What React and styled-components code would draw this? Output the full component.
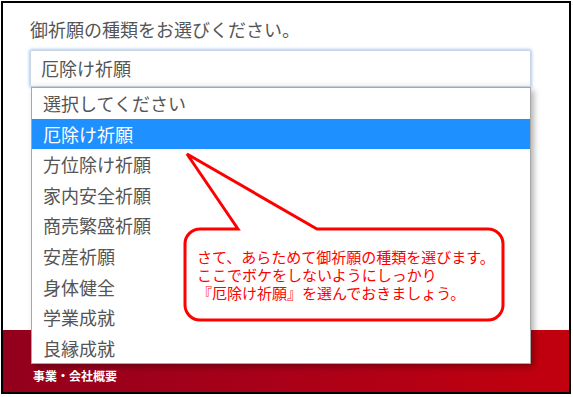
import styled, { createGlobalStyle } from 'styled-components';

const GlobalStyle = createGlobalStyle`
  html, body {
    margin: 0;
    padding: 0;
    background: #fff;
  }
  body {
    font-family: "Noto Sans CJK JP", "Noto Sans", sans-serif;
  }
`;

const options = [
    '選択してください',
    '厄除け祈願',
    '方位除け祈願',
    '家内安全祈願',
    '商売繁盛祈願',
    '安産祈願',
    '身体健全',
    '学業成就',
    '良縁成就',
];

const lines = [
    'さて、あらためて御祈願の種類を選びます。',
    'ここでボケをしないようにしっかり',
    '『厄除け祈願』を選んでおきましょう。',
];

function App() {
    return (
        <>
            <GlobalStyle />
            <Frame>
                <Main>
                    <Title>御祈願の種類をお選びください。</Title>
                    <SelectWrap>
                        <SelectBox>厄除け祈願</SelectBox>
                        <Dropdown>
                            {options.map((o, i) => (
                                <Option key={o} $active={i === 1}>{o}</Option>
                            ))}
                        </Dropdown>
                    </SelectWrap>
                </Main>
                <Footer>事業・会社概要</Footer>

                {/* 吹き出し */}
                <Callout>
                    <svg width="328" height="175" viewBox="0 0 328 175">
                        <path
                            d="M 58 79 L 7 4 L 137 79 H 308 A 15 15 0 0 1 323 94 V 155 A 15 15 0 0 1 308 170 H 20 A 15 15 0 0 1 5 155 V 94 A 15 15 0 0 1 20 79 Z"
                            fill="#fff"
                            stroke="#ff0000"
                            strokeWidth="3"
                        />
                    </svg>
                    <CalloutText>
                        {lines.map(l => <Line key={l}>{l}</Line>)}
                    </CalloutText>
                </Callout>
            </Frame>
        </>
    );
}

const Frame = styled.div`
    position: relative;
    box-sizing: border-box;
    width: 570px;
    height: 393px;
    margin: 1px 0 0 1px;
    border: 2px solid #000;
    display: flex;
    flex-direction: column;
    overflow: hidden;
`;

const Main = styled.div`
    flex: 1;
    padding: 13px 38px 0 27px;
`;

const Title = styled.h1`
    margin: 0;
    font-size: 18px;
    font-weight: 400;
    line-height: 26px;
    color: #555;
`;

const SelectWrap = styled.div`
    position: relative;
    margin-top: 8px;
`;

const SelectBox = styled.div`
    box-sizing: border-box;
    height: 37px;
    padding-left: 10px;
    border: 1px solid #c9d6e6;
    border-radius: 2px;
    box-shadow: 0 0 3px 1px #a9cdf7, inset 0 -6px 8px -6px rgba(0, 0, 0, 0.08);
    font-size: 18px;
    line-height: 35px;
    color: #555;
`;

const Dropdown = styled.ul`
    position: absolute;
    top: 100%;
    left: 1px;
    right: 0;
    margin: 0;
    padding: 0;
    list-style: none;
    background: #fff;
    border: 1px solid #a8a8a8;
    box-shadow: 3px 3px 6px rgba(0, 0, 0, 0.3);
    z-index: 2;
`;

const Option = styled.li`
    height: 30.6px;
    padding-left: 11px;
    font-size: 18px;
    line-height: 30.6px;
    color: ${p => (p.$active ? '#fff' : '#555')};
    background: ${p => (p.$active ? '#1e90ff' : '#fff')};
`;

const Footer = styled.footer`
    height: 62px;
    padding: 37px 0 0 30px;
    box-sizing: border-box;
    background: linear-gradient(90deg, #93001c 0%, #a8001a 45%, #c2000e 100%);
    color: #fff;
    font-size: 12px;
    font-weight: 700;
    line-height: 18px;
`;

const Callout = styled.div`
    position: absolute;
    left: 177px;
    top: 147px;
    width: 328px;
    height: 175px;
    z-index: 3;

    svg {
        position: absolute;
        inset: 0;
        display: block;
    }
`;

const CalloutText = styled.div`
    position: relative;
    display: flex;
    flex-direction: column;
    padding: 98px 0 0 17px;
    color: #ff0000;
    font-size: 15px;
`;

const Line = styled.div`
    height: 18px;
    line-height: 18px;
    white-space: nowrap;
`;

export default App;
